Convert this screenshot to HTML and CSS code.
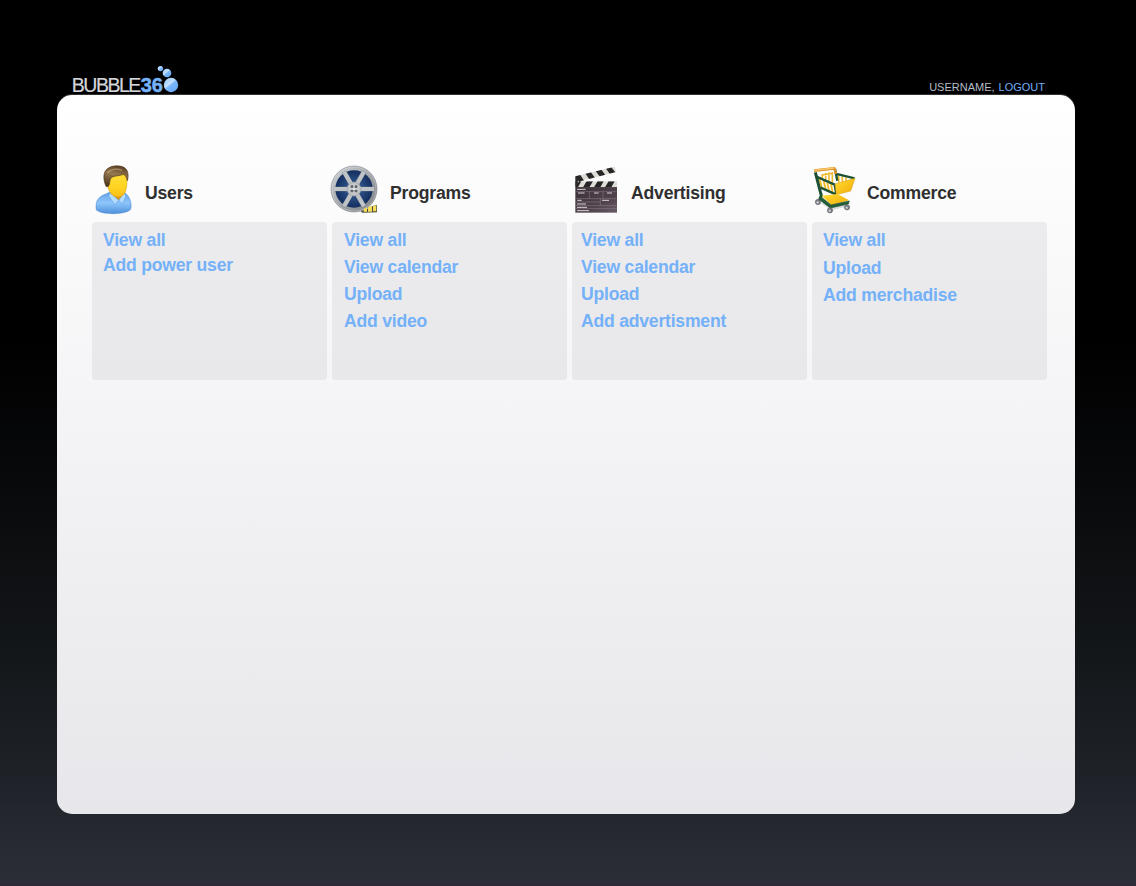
FILE: index.html
```html
<!DOCTYPE html>
<html lang="en">
<head>
<meta charset="utf-8">
<title>Bubble360</title>
<link rel="stylesheet" href="styles.css">
</head>
<body>
<div class="page">
  <header class="header">
    <div class="logo"><span class="logo-word">BUBBLE</span><span class="logo-num">36</span><svg class="bubbles" viewBox="0 0 24 28" width="24" height="28">
      <defs><linearGradient id="bub" x1="0" y1="0" x2=".8" y2="1"><stop offset="0" stop-color="#8fc4fc"/><stop offset=".45" stop-color="#c4e1ff"/><stop offset=".55" stop-color="#7ab7fb"/><stop offset="1" stop-color="#66abf8"/></linearGradient></defs>
      <circle cx="5.4" cy="3.6" r="2.7" fill="url(#bub)"/><circle cx="12" cy="8" r="4.3" fill="url(#bub)"/><circle cx="16" cy="20" r="7.2" fill="url(#bub)"/>
    </svg></div>
    <div class="account"><span class="username">USERNAME,</span><a class="logout">LOGOUT</a></div>
  </header>
  <main class="card">
    <section class="column users">
      <div class="heading">
        <svg class="icon" viewBox="9 6 162 162">
          <defs>
            <linearGradient id="shirt" x1="0" y1="0" x2="0" y2="1"><stop offset="0" stop-color="#5fa2e6"/><stop offset=".5" stop-color="#8fc6fa"/><stop offset="1" stop-color="#4d90dc"/></linearGradient>
            <linearGradient id="face" x1="0" y1="0" x2="0" y2="1"><stop offset="0" stop-color="#ffe03a"/><stop offset=".6" stop-color="#ffd423"/><stop offset="1" stop-color="#f9bd14"/></linearGradient>
            <linearGradient id="hair" x1=".6" y1="0" x2=".3" y2="1"><stop offset="0" stop-color="#5d4023"/><stop offset=".4" stop-color="#94784f"/><stop offset="1" stop-color="#51361d"/></linearGradient>
          </defs>
          <path d="M34 150 C31 126 36 112 62 102 L76 96 L116 96 C134 106 142 130 137 148 C124 165 50 165 34 150Z" fill="url(#shirt)" stroke="#4284cc" stroke-width="1.5"/>
          <path d="M77 92 L79 103 L101 122 L115 107 L114 90Z" fill="#e2950a"/>
          <path d="M76 98 L71 107 L89 134 L101 121Z M117 99 L123 108 L113 132 L101 121Z" fill="#b4dcff" stroke="#4e95dc" stroke-width="1.5"/>
          <path d="M66 56 C66 84 74 98 82 105 C91 113 108 113 115 105 C124 96 127 76 126 47 C119 33 81 30 66 56Z" fill="url(#face)" stroke="#d99a0c" stroke-width="1.5"/>
          <path d="M64 80 C54 62 53 34 69 25 C83 15 111 15 122 26 C130 34 131 50 127 62 C125 53 122 47 116 43 C102 48 88 47 80 52 C72 58 76 73 70 79Z" fill="url(#hair)" stroke="#4a321b" stroke-width="2"/>
          <path d="M68 38 C80 27 96 25 111 31" fill="none" stroke="#c6b28e" stroke-width="4" opacity=".6"/>
        </svg>
        <h2>Users</h2>
      </div>
      <nav class="panel"><a>View all</a><a>Add power user</a></nav>
    </section>

    <section class="column programs">
      <div class="heading">
        <svg class="icon" viewBox="24 6 162 162">
          <defs>
            <linearGradient id="rim" x1="0" y1="0" x2="1" y2="1"><stop offset="0" stop-color="#d5d8da"/><stop offset=".5" stop-color="#a3a6aa"/><stop offset="1" stop-color="#7b7f84"/></linearGradient>
            <radialGradient id="disc"><stop offset="0" stop-color="#3a659f"/><stop offset="1" stop-color="#142e5e"/></radialGradient>
            <radialGradient id="hub"><stop offset="0" stop-color="#e3e4e5"/><stop offset="1" stop-color="#b8bbbe"/></radialGradient>
          </defs>
          <circle cx="102" cy="87" r="69" fill="url(#rim)" stroke="#858a90" stroke-width="2"/>
          <circle cx="102" cy="87" r="66" fill="none" stroke="#e2e4e5" stroke-width="2" opacity=".5"/>
          <circle cx="102" cy="87" r="56" fill="url(#disc)"/>
          <path d="M42 87 H162 M72 35 L132 139 M132 35 L72 139" stroke="#7d858e" stroke-width="14"/>
          <path d="M42 87 H162 M72 35 L132 139 M132 35 L72 139" stroke="#c0c3c6" stroke-width="12"/>
          <circle cx="102" cy="87" r="21" fill="url(#hub)" stroke="#9a9fa3" stroke-width="1.5"/>
          <g fill="#60656b"><rect x="92" y="76" width="8" height="8" rx="2"/><rect x="104" y="76" width="8" height="8" rx="2"/><rect x="92" y="89" width="8" height="8" rx="2"/><rect x="104" y="89" width="8" height="8" rx="2"/></g>
          <path d="M122 153 C142 150 149 138 171 135 L171 157 L127 158Z" fill="#4b4b3b"/>
          <path d="M131 147 L141 142 V155 H131Z M144 141 L156 138 V155 H144Z M159 138 L169 136 V154 H159Z" fill="#f6dc58"/>
        </svg>
        <h2>Programs</h2>
      </div>
      <nav class="panel"><a>View all</a><a>View calendar</a><a>Upload</a><a>Add video</a></nav>
    </section>

    <section class="column advertising">
      <div class="heading">
        <svg class="icon" viewBox="9 6 162 162">
          <defs><linearGradient id="slate" x1="0" y1="0" x2="1" y2="1"><stop offset="0" stop-color="#3a3037"/><stop offset=".65" stop-color="#51434d"/><stop offset="1" stop-color="#6a5b66"/></linearGradient>
          <clipPath id="arm"><path d="M31 49 L149 20 L153 36 L37 66Z"/></clipPath><clipPath id="bar"><path d="M31 64 H156 V82 H31Z"/></clipPath></defs>
          <rect x="31" y="80" width="125" height="78" fill="url(#slate)"/>
          <g clip-path="url(#arm)"><path d="M25 15 H160 V70 H25Z" fill="#dcdcd5"/><path d="M27 46 L44 42 L60 66 H35Z M58 36 L75 32 L92 57 L75 61Z M89 29 L106 25 L123 48 L106 52Z M120 22 L136 18 L154 41 L137 45Z" fill="#272526"/></g>
          <g clip-path="url(#bar)"><path d="M31 64 H156 V82 H31Z" fill="#deded7"/><path d="M31 64 H49 L39 82 H31Z M65 64 H84 L73 82 H54Z M98 64 H116 L106 82 H87Z M131 64 H149 L139 82 H120Z" fill="#272526"/></g>
          <path d="M31 49 L46 64 L31 81Z" fill="#302c2e"/><circle cx="40" cy="65" r="2" fill="#d5d1d2"/>
          <path d="M33 95 H155 M33 116 H155 M33 126 H106 M33 137 H155 M33 146 H155 M73 95 V116 M114 95 V116 M106 116 V137" fill="none" stroke="#9c919a" stroke-width="1.3"/>
          <path d="M36 88 H62 M39 99 H59 M87 99 H101 M126 99 H141 M37 121 H50 M111 121 H132 M36 132 H63 M36 142 H66 M36 152 H72" fill="none" stroke="#eee9ed" stroke-width="2.600"/>
        </svg>
        <h2>Advertising</h2>
      </div>
      <nav class="panel"><a>View all</a><a>View calendar</a><a>Upload</a><a>Add advertisment</a></nav>
    </section>

    <section class="column commerce">
      <div class="heading">
        <svg class="icon" viewBox="9 6 162 162">
          <defs><linearGradient id="gold" x1="0" y1="0" x2="1" y2="1"><stop offset="0" stop-color="#ffe033"/><stop offset=".5" stop-color="#fac41c"/><stop offset="1" stop-color="#efaa0c"/></linearGradient></defs>
          <path d="M47 130 L80 151 L134 138 L108 119Z" fill="#999" opacity=".3"/>
          <path d="M49 46 L84 40 M52 42 V60 M62 39 V66 M72 37 V70 M82 36 V72" fill="none" stroke="#edb824" stroke-width="4.500"/>
          <path d="M101 46 V68 M112 49 V65 M123 52 V62" stroke="#edb824" stroke-width="5"/>
          <path d="M44 58 L50 82 M56 63 L62 87 M67 68 L72 93 M78 72 L83 98" stroke="#f0bc20" stroke-width="5.500"/>
          <path d="M34 50 L89 74 L94 104 L47 83" fill="none" stroke="#1d5234" stroke-width="7" stroke-linejoin="round"/>
          <path d="M90 27 L97 62 M91 41 L149 55" fill="none" stroke="#1d5234" stroke-width="7" stroke-linejoin="round"/>
          <path d="M90 72 L150 55 L137 93 L94 104Z" fill="url(#gold)" stroke="#d99d10" stroke-width="1.5"/>
          <path d="M27 32 L88 25 L93 42" fill="none" stroke="#d9942a" stroke-width="8" stroke-linejoin="round"/>
          <path d="M27 31 L87 24" stroke="#ffc96b" stroke-width="4"/>
          <path d="M31 37 L49 107 L43 121" fill="none" stroke="#1b5033" stroke-width="9" stroke-linejoin="round"/>
          <path d="M50 107 L98 102 L132 121 L80 136Z" fill="url(#gold)"/>
          <path d="M46 109 L78 135 L133 123 L130 132 L76 144 L43 119Z" fill="#236039" stroke="#1b5033" stroke-width="2"/>
          <g fill="#777b80" stroke="#5b5f63" stroke-width="1.5"><ellipse cx="39" cy="126" rx="8" ry="8"/><ellipse cx="75" cy="151" rx="8" ry="8"/><ellipse cx="126" cy="142" rx="8" ry="8"/></g>
          <g fill="#d0d1d3"><circle cx="38" cy="127" r="3.500"/><circle cx="74" cy="152" r="3.500"/><circle cx="125" cy="143" r="3.500"/></g>
        </svg>
        <h2>Commerce</h2>
      </div>
      <nav class="panel"><a>View all</a><a>Upload</a><a>Add merchadise</a></nav>
    </section>
  </main>
</div>
</body>
</html>
```

FILE: styles.css
```css
* { box-sizing: border-box; }

body {
  margin: 0;
  font-family: "Liberation Sans", Arial, sans-serif;
  background: #000;
}

.page {
  height: 886px;
  padding: 0 61px 0 57px;
  background: linear-gradient(#000 0, #000 340px, #08090b 480px, #14171a 660px, #1f2329 780px, #2b2e37 883px);
  border-bottom: 3px solid #2e2936;
}

.header {
  height: 95px;
  display: flex;
  justify-content: space-between;
  align-items: flex-end;
  padding: 0 30px 0 14.8px;
}

.logo {
  display: flex;
  align-items: flex-end;
  height: 30px;
}

.logo-word {
  font-size: 19.5px;
  line-height: 20px;
  letter-spacing: -1.5px;
  color: #d5d7dc;
  -webkit-text-stroke: 0.2px #d5d7dc;
}

.logo-num {
  font-size: 20px;
  line-height: 20px;
  font-weight: bold;
  color: #75b2f8;
  margin-left: 1px;
  -webkit-text-stroke: 0.5px #75b2f8;
}

.bubbles {
  margin: 0 0 2px -8px;
}

.account {
  display: flex;
  gap: 4px;
  font-size: 11px;
  line-height: 16px;
}

.username { color: #b5bdc7; }
.logout { color: #70aff5; }

.card {
  height: 719px;
  border-radius: 15px;
  padding: 67px 28px 0 35px;
  display: grid;
  grid-template-columns: repeat(4, 235px);
  gap: 5px;
  align-items: start;
  background: linear-gradient(#fff, #f4f4f6 45%, #e7e6ea);
  box-shadow: 0 -1px 0 #333;
}

.heading {
  height: 60px;
  display: flex;
  align-items: flex-start;
}

.icon {
  width: 54px;
  height: 54px;
  margin-left: -4px;
  flex: none;
}

h2 {
  margin: 21px 0 0;
  font-size: 17.6px;
  line-height: 20px;
  letter-spacing: -0.2px;
  color: #2f2f2f;
}

.panel {
  height: 158px;
  border-radius: 4px;
  display: flex;
  flex-direction: column;
  background: linear-gradient(#ececee, #e8e8eb);
  padding-top: 5px;
}

.panel a {
  font-size: 17.6px;
  line-height: 27px;
  font-weight: bold;
  letter-spacing: -0.22px;
  color: #74b1f8;
}

.users h2 { padding-left: 3px; }
.users .panel { padding: 6px 0 0 11px; }
.users .panel a { line-height: 25px; }
.programs h2 { padding-left: 8px; }
.programs .panel { padding-left: 12px; }
.advertising h2 { padding-left: 9px; }
.advertising .panel { padding-left: 9px; }
.commerce h2 { padding-left: 5px; }
.commerce .panel { padding-left: 11px; }
.commerce .panel a { line-height: 27.5px; }
```
